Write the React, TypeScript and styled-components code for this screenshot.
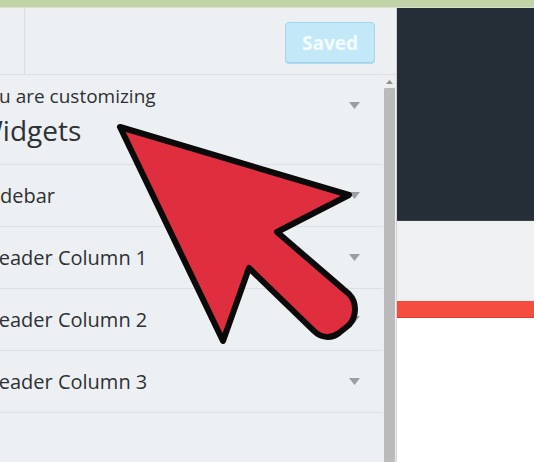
import * as React from "react"
import styled, { createGlobalStyle } from "styled-components"

const GlobalStyle = createGlobalStyle`
  html, body {
    margin: 0;
    padding: 0;
    background: #ffffff;
    overflow: hidden;
  }
  body {
    font-family: "Open Sans", "Noto Sans", sans-serif;
  }
`

const sections = ["Sidebar", "Header Column 1", "Header Column 2", "Header Column 3"]

const Caret = () => (
  <svg width="11" height="7" viewBox="0 0 11 7">
    <path d="M0 0 L11 0 L5.5 7 Z" fill="#9c9ea1" />
  </svg>
)

const App = () => {
  return (
    <Page>
      <GlobalStyle />
      <TopStrip />
      <Main>
        <Sidebar>
          <Header>
            <CloseArea />
            <SavedButton>Saved</SavedButton>
          </Header>
          <Body>
            <List>
              <ListInner>
                <Info>
                  <InfoText>
                    <InfoLabel>You are customizing</InfoLabel>
                    <InfoTitle>Widgets</InfoTitle>
                  </InfoText>
                  <CaretTop>
                    <Caret />
                  </CaretTop>
                </Info>
                {sections.map(s => (
                  <Row key={s}>
                    <RowTitle>{s}</RowTitle>
                    <Caret />
                  </Row>
                ))}
              </ListInner>
            </List>
            <Scrollbar>
              <ScrollUp>
                <svg width="7" height="4" viewBox="0 0 7 4">
                  <path d="M0 4 L7 4 L3.5 0 Z" fill="#8d8f92" />
                </svg>
              </ScrollUp>
              <Thumb />
            </Scrollbar>
          </Body>
        </Sidebar>
        <Preview>
          <DarkHero />
          <GrayBand />
          <RedStripe />
          <WhiteArea />
        </Preview>
      </Main>
      <ArrowOverlay width="534" height="462" viewBox="0 0 534 462">
        <path
          d="M120 127 L349 195 L277 232 L349 294 C357 302 357 316 349 325 L339 333 C331 339 321 338 314 331 L249 268 L223 341 Z"
          fill="#df2f3f"
          stroke="#0a0a0a"
          strokeWidth="6"
          strokeLinejoin="round"
        />
      </ArrowOverlay>
    </Page>
  )
}

const Page = styled.div`
  position: relative;
  width: 534px;
  height: 462px;
  overflow: hidden;
  display: flex;
  flex-direction: column;
`

const TopStrip = styled.div`
  height: 7px;
  background: #bfd3a7;
  border-bottom: 1px solid #d7dfd0;
  flex-shrink: 0;
`

const Main = styled.div`
  flex: 1;
  display: flex;
  min-height: 0;
`

const Sidebar = styled.div`
  width: 396px;
  flex-shrink: 0;
  display: flex;
  flex-direction: column;
  background: #edf0f3;
  border-right: 1px solid #cfd3d7;
`

const Header = styled.div`
  height: 67px;
  flex-shrink: 0;
  display: flex;
  align-items: flex-start;
  justify-content: space-between;
  border-bottom: 1px solid #dde1e5;
  box-sizing: border-box;
  padding-right: 21px;
`

const CloseArea = styled.div`
  width: 24px;
  height: 100%;
  border-right: 1px solid #dadee2;
`

const SavedButton = styled.div`
  margin-top: 14px;
  width: 90px;
  height: 41px;
  box-sizing: border-box;
  background: #c3e9f8;
  border: 1px solid #a3d6ec;
  border-radius: 4px;
  box-shadow: 0 1px 0 #b2dcee;
  color: #f4fbff;
  font-weight: 700;
  font-size: 19px;
  display: flex;
  align-items: center;
  justify-content: center;
`

const Body = styled.div`
  flex: 1;
  display: flex;
  min-height: 0;
`

const List = styled.div`
  flex: 1;
  overflow: hidden;
`

const ListInner = styled.div`
  margin-left: -30px;
`

const Info = styled.div`
  height: 90px;
  box-sizing: border-box;
  border-bottom: 1px solid #dde1e5;
  display: flex;
  justify-content: space-between;
  padding: 8px 23px 0 7px;
`

const InfoText = styled.div`
  display: flex;
  flex-direction: column;
`

const InfoLabel = styled.span`
  font-size: 19px;
  line-height: 26px;
  color: #2e3033;
`

const InfoTitle = styled.span`
  font-size: 28px;
  line-height: 42px;
  color: #2e3033;
`

const CaretTop = styled.div`
  padding-top: 9px;
`

const Row = styled.div`
  height: 62px;
  box-sizing: border-box;
  border-bottom: 1px solid #dde1e5;
  display: flex;
  align-items: center;
  justify-content: space-between;
  padding: 0 23px 0 14px;
`

const RowTitle = styled.span`
  font-size: 20px;
  color: #2e3033;
`

const Scrollbar = styled.div`
  width: 13px;
  flex-shrink: 0;
  background: #eeeeee;
  display: flex;
  flex-direction: column;
  align-items: center;
`

const ScrollUp = styled.div`
  height: 13px;
  display: flex;
  align-items: center;
  justify-content: center;
`

const Thumb = styled.div`
  flex: 1;
  width: 11px;
  background: #bababa;
  border-radius: 1px;
`

const Preview = styled.div`
  flex: 1;
  display: flex;
  flex-direction: column;
`

const DarkHero = styled.div`
  height: 212px;
  background: #252e36;
  border-bottom: 1px solid #3a4148;
`

const GrayBand = styled.div`
  height: 80px;
  background: #eef0f2;
`

const RedStripe = styled.div`
  height: 16px;
  background: #f44d40;
  border-bottom: 1px solid #e03a30;
`

const WhiteArea = styled.div`
  flex: 1;
  background: #ffffff;
`

const ArrowOverlay = styled.svg`
  position: absolute;
  left: 0;
  top: 0;
  pointer-events: none;
`

export default App
